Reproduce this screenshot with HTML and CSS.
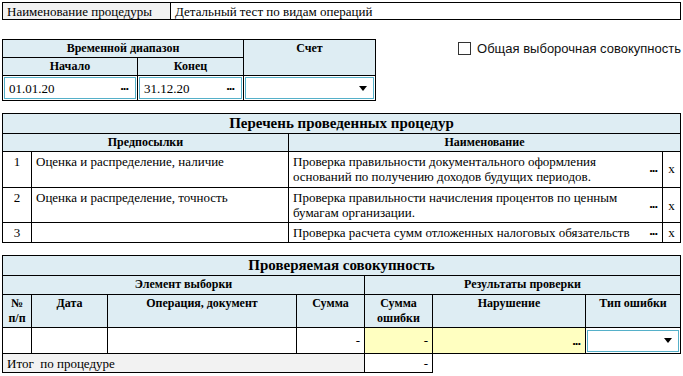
FILE: index.html
```html
<html>
<head>
  <title>Процедура</title>
  <link rel="stylesheet" href="styles.css">
</head>
<body>
  <table class="grid name-table">
    <colgroup><col class="n-label"><col></colgroup>
    <tr>
      <td class="label">Наименование процедуры</td>
      <td>Детальный тест по видам операций</td>
    </tr>
  </table>

  <div class="range-row">
    <table class="grid range-table">
      <colgroup><col class="c-start"><col class="c-end"><col></colgroup>
      <tr>
        <th colspan="2">Временной диапазон</th>
        <th rowspan="2">Счет</th>
      </tr>
      <tr>
        <th>Начало</th>
        <th>Конец</th>
      </tr>
      <tr>
        <td class="in-cell"><div class="field"><span>01.01.20</span><span class="dots">...</span></div></td>
        <td class="in-cell"><div class="field"><span>31.12.20</span><span class="dots">...</span></div></td>
        <td class="in-cell"><div class="field"><span></span><span class="arrow"></span></div></td>
      </tr>
    </table>
    <label class="check"><span class="box"></span>Общая выборочная совокупность</label>
  </div>

  <table class="grid proc-table">
    <colgroup><col class="p-num"><col class="p-prem"><col class="p-name"><col class="p-del"></colgroup>
    <tr><th colspan="4" class="title">Перечень проведенных процедур</th></tr>
    <tr>
      <th colspan="2">Предпосылки</th>
      <th colspan="2">Наименование</th>
    </tr>
    <tr class="first">
      <td class="num">1</td>
      <td>Оценка и распределение, наличие</td>
      <td class="pname"><div class="pwrap"><span>Проверка правильности документального оформления оснований по получению доходов будущих периодов.</span><span class="dots">...</span></div></td>
      <td class="del">x</td>
    </tr>
    <tr>
      <td class="num">2</td>
      <td>Оценка и распределение, точность</td>
      <td class="pname"><div class="pwrap"><span>Проверка правильности начисления процентов по ценным бумагам организации.</span><span class="dots">...</span></div></td>
      <td class="del">x</td>
    </tr>
    <tr class="short">
      <td class="num">3</td>
      <td></td>
      <td class="pname"><div class="pwrap"><span>Проверка расчета сумм отложенных налоговых обязательств</span><span class="dots">...</span></div></td>
      <td class="del">x</td>
    </tr>
  </table>

  <table class="grid sample-table">
    <colgroup>
      <col class="s-num"><col class="s-date"><col class="s-doc"><col class="s-sum">
      <col class="s-err"><col class="s-viol"><col>
    </colgroup>
    <tr><th colspan="7" class="title">Проверяемая совокупность</th></tr>
    <tr>
      <th colspan="4">Элемент выборки</th>
      <th colspan="3">Результаты проверки</th>
    </tr>
    <tr class="heads">
      <th>№ п/п</th>
      <th>Дата</th>
      <th>Операция, документ</th>
      <th>Сумма</th>
      <th>Сумма ошибки</th>
      <th>Нарушение</th>
      <th>Тип ошибки</th>
    </tr>
    <tr class="data">
      <td></td>
      <td></td>
      <td></td>
      <td class="amount">-</td>
      <td class="amount yellow">-</td>
      <td class="amount yellow"><span class="dots">...</span></td>
      <td class="in-cell"><div class="field"><span></span><span class="arrow"></span></div></td>
    </tr>
    <tr class="total">
      <td colspan="4" class="label">Итог &nbsp;по процедуре</td>
      <td class="amount">-</td>
      <td class="empty"></td>
      <td class="empty"></td>
    </tr>
  </table>
</body>
</html>
```

FILE: styles.css
```css
body {
  margin: 0;
  padding: 2px;
  font-family: "Liberation Serif", "Times New Roman", serif;
  font-size: 13px;
  color: #000;
  background: #fff;
}
.grid {
  border-collapse: collapse;
  table-layout: fixed;
  font-family: "Liberation Serif", "Times New Roman", serif;
  font-size: 13px;
}
.grid td, .grid th {
  border: 1px solid #000;
  padding: 0 4px;
  line-height: 15px;
}
.grid th {
  background-color: #deedf3;
  font-size: 12px;
  font-weight: bold;
  vertical-align: top;
  padding-top: 1px;
  padding-bottom: 1px;
}
.grid th.title {
  font-size: 15px;
  height: 20px;
  vertical-align: middle;
}
.label {
  background-color: #f2f2f2;
}
.name-table {
  width: 679px;
}
.name-table td {
  height: 17px;
}
.n-label { width: 168px; }

.range-row {
  display: flex;
  justify-content: space-between;
  align-items: flex-start;
  margin-top: 19px;
  width: 679px;
}
.range-table {
  width: 374px;
}
.range-table th {
  height: 18px;
}
.c-start { width: 135px; }
.c-end { width: 106px; }
.in-cell {
  padding: 1px !important;
  height: 23px;
}
.field {
  display: flex;
  justify-content: space-between;
  align-items: center;
  height: 20px;
  border: 1px solid #55b0c9;
  padding: 0 6px 0 4px;
  background: #fff;
}
.dots {
  font-family: "Liberation Sans", Arial, sans-serif;
  font-weight: bold;
  font-size: 13px;
  letter-spacing: -1px;
  line-height: 8px;
  padding-bottom: 5px;
  padding-right: 1px;
}
.arrow {
  width: 0;
  height: 0;
  border-left: 4px solid transparent;
  border-right: 4px solid transparent;
  border-top: 5px solid #000;
}
.check {
  display: flex;
  align-items: center;
  margin-top: 2px;
  font-family: "Liberation Sans", Arial, sans-serif;
  font-size: 13px;
  color: #111;
}
.check .box {
  width: 11px;
  height: 11px;
  border: 1px solid #333;
  margin-right: 6px;
  background: #fff;
}

.proc-table {
  width: 679px;
  margin-top: 12px;
}
.proc-table th {
  height: 18px;
}
.proc-table td {
  vertical-align: top;
  padding-top: 2px;
  padding-bottom: 2px;
}
.proc-table .first td {
  padding-bottom: 3px;
}
.proc-table .short td {
  height: 18px;
  vertical-align: middle;
}
.p-num { width: 29px; }
.p-prem { width: 257px; }
.p-name { width: 374px; }
.proc-table .num {
  text-align: center;
}
.proc-table .pname {
  vertical-align: middle;
}
.pwrap {
  display: flex;
  justify-content: space-between;
  align-items: center;
  gap: 14px;
}
.pwrap .dots {
  flex-shrink: 0;
  padding-top: 2px;
}
.proc-table .del {
  text-align: center;
  vertical-align: middle;
  padding: 0;
}

.sample-table {
  width: 679px;
  margin-top: 12px;
}
.sample-table th {
  height: 19px;
}
.sample-table .heads th {
  height: 29px;
}
.s-num { width: 29px; }
.s-date { width: 76px; }
.s-doc { width: 189px; }
.s-sum { width: 68px; }
.s-err { width: 68px; }
.s-viol { width: 153px; }
.sample-table .data td {
  height: 26px;
}
.amount {
  text-align: right;
  vertical-align: middle;
}
.yellow {
  background-color: #ffffc1;
}
.sample-table .data .in-cell {
  vertical-align: middle;
}
.sample-table .total td {
  height: 19px;
}
.sample-table .empty {
  border: none;
}
```
